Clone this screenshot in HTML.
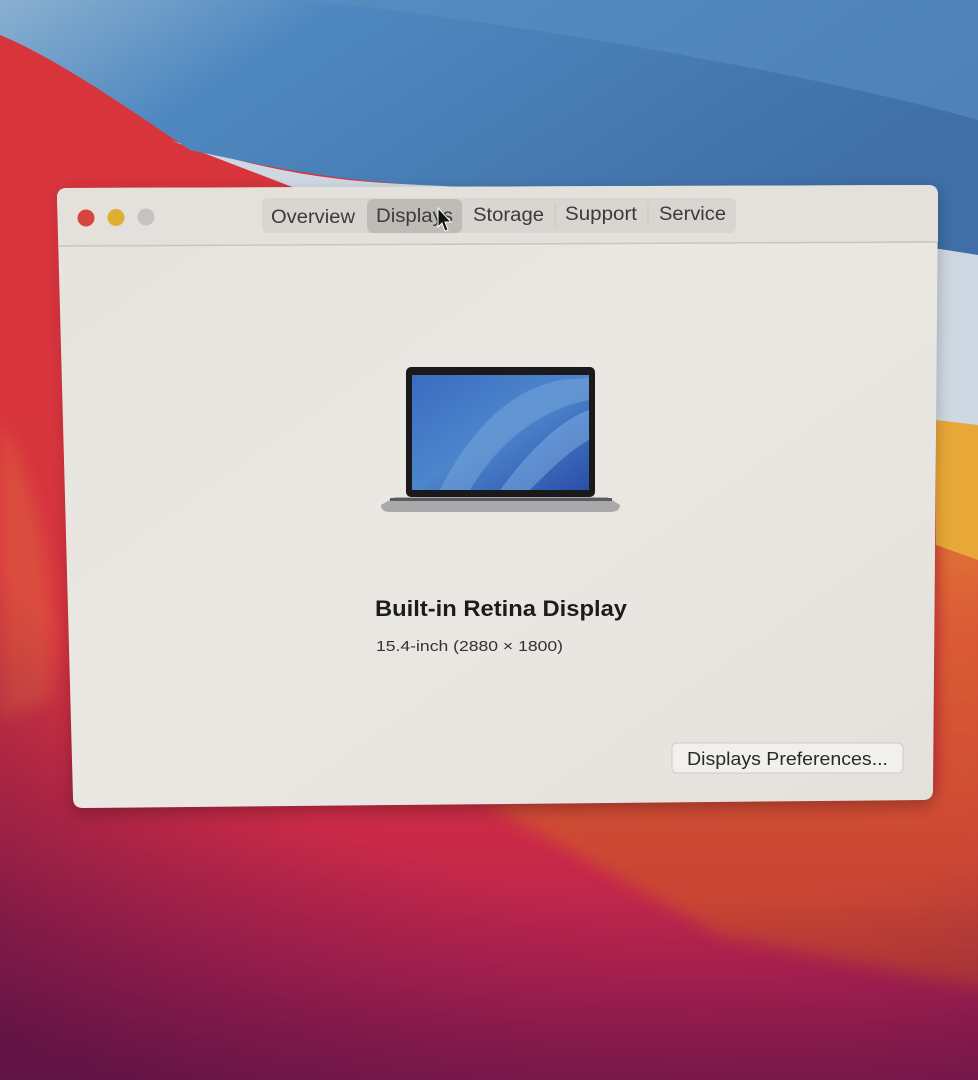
<!DOCTYPE html>
<html><head><meta charset="utf-8"><style>
html,body{margin:0;padding:0;width:978px;height:1080px;overflow:hidden;background:#c83040}
svg{display:block}
text{font-family:"Liberation Sans","DejaVu Sans",sans-serif}
</style></head><body>
<svg width="978" height="1080" viewBox="0 0 978 1080" xmlns="http://www.w3.org/2000/svg">
<defs>
<linearGradient id="bg" x1="0" y1="0" x2="0" y2="1">
<stop offset="0" stop-color="#d8343c"/>
<stop offset="0.6" stop-color="#d6343e"/>
<stop offset="0.78" stop-color="#ca2a48"/>
<stop offset="0.9" stop-color="#b42250"/>
<stop offset="1" stop-color="#941c50"/>
</linearGradient>
<radialGradient id="vig" gradientUnits="userSpaceOnUse" cx="700" cy="0" r="1250">
<stop offset="0.72" stop-color="#4a1040" stop-opacity="0"/>
<stop offset="1" stop-color="#4a1040" stop-opacity="0.7"/>
</radialGradient>
<linearGradient id="blue" x1="0" y1="0" x2="1" y2="0.4">
<stop offset="0" stop-color="#8ab0d0"/>
<stop offset="0.3" stop-color="#4f88c0"/>
<stop offset="1" stop-color="#3f6fa6"/>
</linearGradient>
<linearGradient id="rightwarm" x1="0" y1="0" x2="0" y2="1">
<stop offset="0" stop-color="#e89838"/>
<stop offset="0.35" stop-color="#dc6234"/>
<stop offset="1" stop-color="#c44030"/>
</linearGradient>
<linearGradient id="win" x1="0" y1="0" x2="1" y2="1">
<stop offset="0" stop-color="#e6e3de"/>
<stop offset="0.5" stop-color="#ebe8e3"/>
<stop offset="1" stop-color="#e4e1dc"/>
</linearGradient>
<linearGradient id="scr" x1="0" y1="0" x2="1" y2="1">
<stop offset="0" stop-color="#3a6cc0"/>
<stop offset="0.5" stop-color="#4d86cc"/>
<stop offset="1" stop-color="#2a4ea8"/>
</linearGradient>
<filter id="bl" x="-20%" y="-20%" width="140%" height="140%"><feGaussianBlur stdDeviation="8"/></filter>
<filter id="sh"><feGaussianBlur stdDeviation="8"/></filter>
</defs>
<rect width="978" height="1080" fill="url(#bg)"/>
<path d="M0,420 C40,480 60,600 50,700 L0,720 Z" fill="#e06a40" opacity="0.45" filter="url(#bl)"/>
<path d="M936,420 L990,420 L990,990 L720,935 L480,800 L936,790 Z" fill="url(#rightwarm)" filter="url(#bl)" opacity="0.9"/>
<rect width="978" height="1080" fill="url(#vig)"/>
<path d="M978,420 L978,560 L936,545 L936,420 Z" fill="#e8a838"/>
<path d="M170,140 C260,170 340,185 450,185 L978,250 L978,425 L936,420 L936,200 L300,190 Z" fill="#cfd8e2"/>
<path d="M0,0 L978,0 L978,255 C820,230 560,190 420,185 C330,180 260,165 190,150 C130,110 60,60 0,35 Z" fill="url(#blue)"/>
<path d="M300,0 C500,20 800,70 978,120 L978,0 Z" fill="#5a8fc2" opacity="0.6"/>
<!-- window -->
<path d="M65,198 Q57,190 70,188 L928,185 Q938,185 938,195 L933,790 Q933,800 923,800 L83,808 Q73,808 73,798 Z" fill="#000" opacity="0.25" filter="url(#sh)" transform="translate(0,6)"/>
<path d="M67,188 L928,185 Q938,185 938,195 L933,790 Q933,800 923,800 L83,808 Q73,808 73,798 L57,198 Q57,188 67,188 Z" fill="url(#win)"/>
<path d="M67,188 L928,185 Q938,185 938,195 L938,242 L59,246 L57,198 Q57,188 67,188 Z" fill="#e4e1dc"/>
<line x1="59" y1="246" x2="938" y2="242" stroke="#c9c6c1" stroke-width="1.5"/>
<circle cx="86" cy="218" r="8.5" fill="#d8453e"/>
<circle cx="116" cy="217.5" r="8.5" fill="#dcb030"/>
<circle cx="146" cy="217" r="8.5" fill="#c5c3c0"/>
<rect x="262" y="198" width="474" height="35" rx="6" fill="#d9d6d1"/>
<rect x="367" y="199" width="95" height="34" rx="6" fill="#bfbcb7"/>
<line x1="555" y1="204" x2="555" y2="227" stroke="#c8c5c0"/>
<line x1="648" y1="204" x2="648" y2="227" stroke="#c8c5c0"/>
<g font-size="19" fill="#3c3b3a">
<text x="271" y="223" textLength="84" lengthAdjust="spacingAndGlyphs">Overview</text>
<text x="376" y="222" textLength="77" lengthAdjust="spacingAndGlyphs">Displays</text>
<text x="473" y="221" textLength="71" lengthAdjust="spacingAndGlyphs">Storage</text>
<text x="565" y="220" textLength="72" lengthAdjust="spacingAndGlyphs">Support</text>
<text x="659" y="220" textLength="67" lengthAdjust="spacingAndGlyphs">Service</text>
</g>
<path d="M438,208 L438,227 L442,223 L445,231 L448,230 L445,222 L451,222 Z" fill="#111" stroke="#fff" stroke-width="1"/>
<!-- laptop -->
<rect x="406" y="367" width="189" height="130" rx="5" fill="#1a1a1c"/>
<rect x="412" y="375" width="177" height="115" fill="url(#scr)"/>
<path d="M440,490 C470,430 510,390 560,380 L589,378 L589,400 C540,410 500,440 470,490 Z" fill="#7aa8dc" opacity="0.5"/>
<path d="M500,490 C530,450 560,420 589,410 L589,440 C570,450 550,470 530,490 Z" fill="#8ab8e8" opacity="0.45"/>
<path d="M381,505 L395,497 L607,497 L620,505 Q620,512 610,512 L390,512 Q381,512 381,505 Z" fill="#a9a9ab"/>
<rect x="390" y="498" width="222" height="3" fill="#5c5c5e"/>
<!-- text -->
<text x="375" y="616" font-size="22" font-weight="bold" fill="#1c1c1c" textLength="252" lengthAdjust="spacingAndGlyphs">Built-in Retina Display</text>
<text x="376" y="651" font-size="15" fill="#333" textLength="187" lengthAdjust="spacingAndGlyphs">15.4-inch (2880 × 1800)</text>
<rect x="672" y="743" width="231" height="30" rx="5" fill="#f2f0ec" stroke="#cfccc8"/>
<text x="687" y="765" font-size="18" fill="#2a2a2a" textLength="201" lengthAdjust="spacingAndGlyphs">Displays Preferences...</text>
</svg>
</body></html>
